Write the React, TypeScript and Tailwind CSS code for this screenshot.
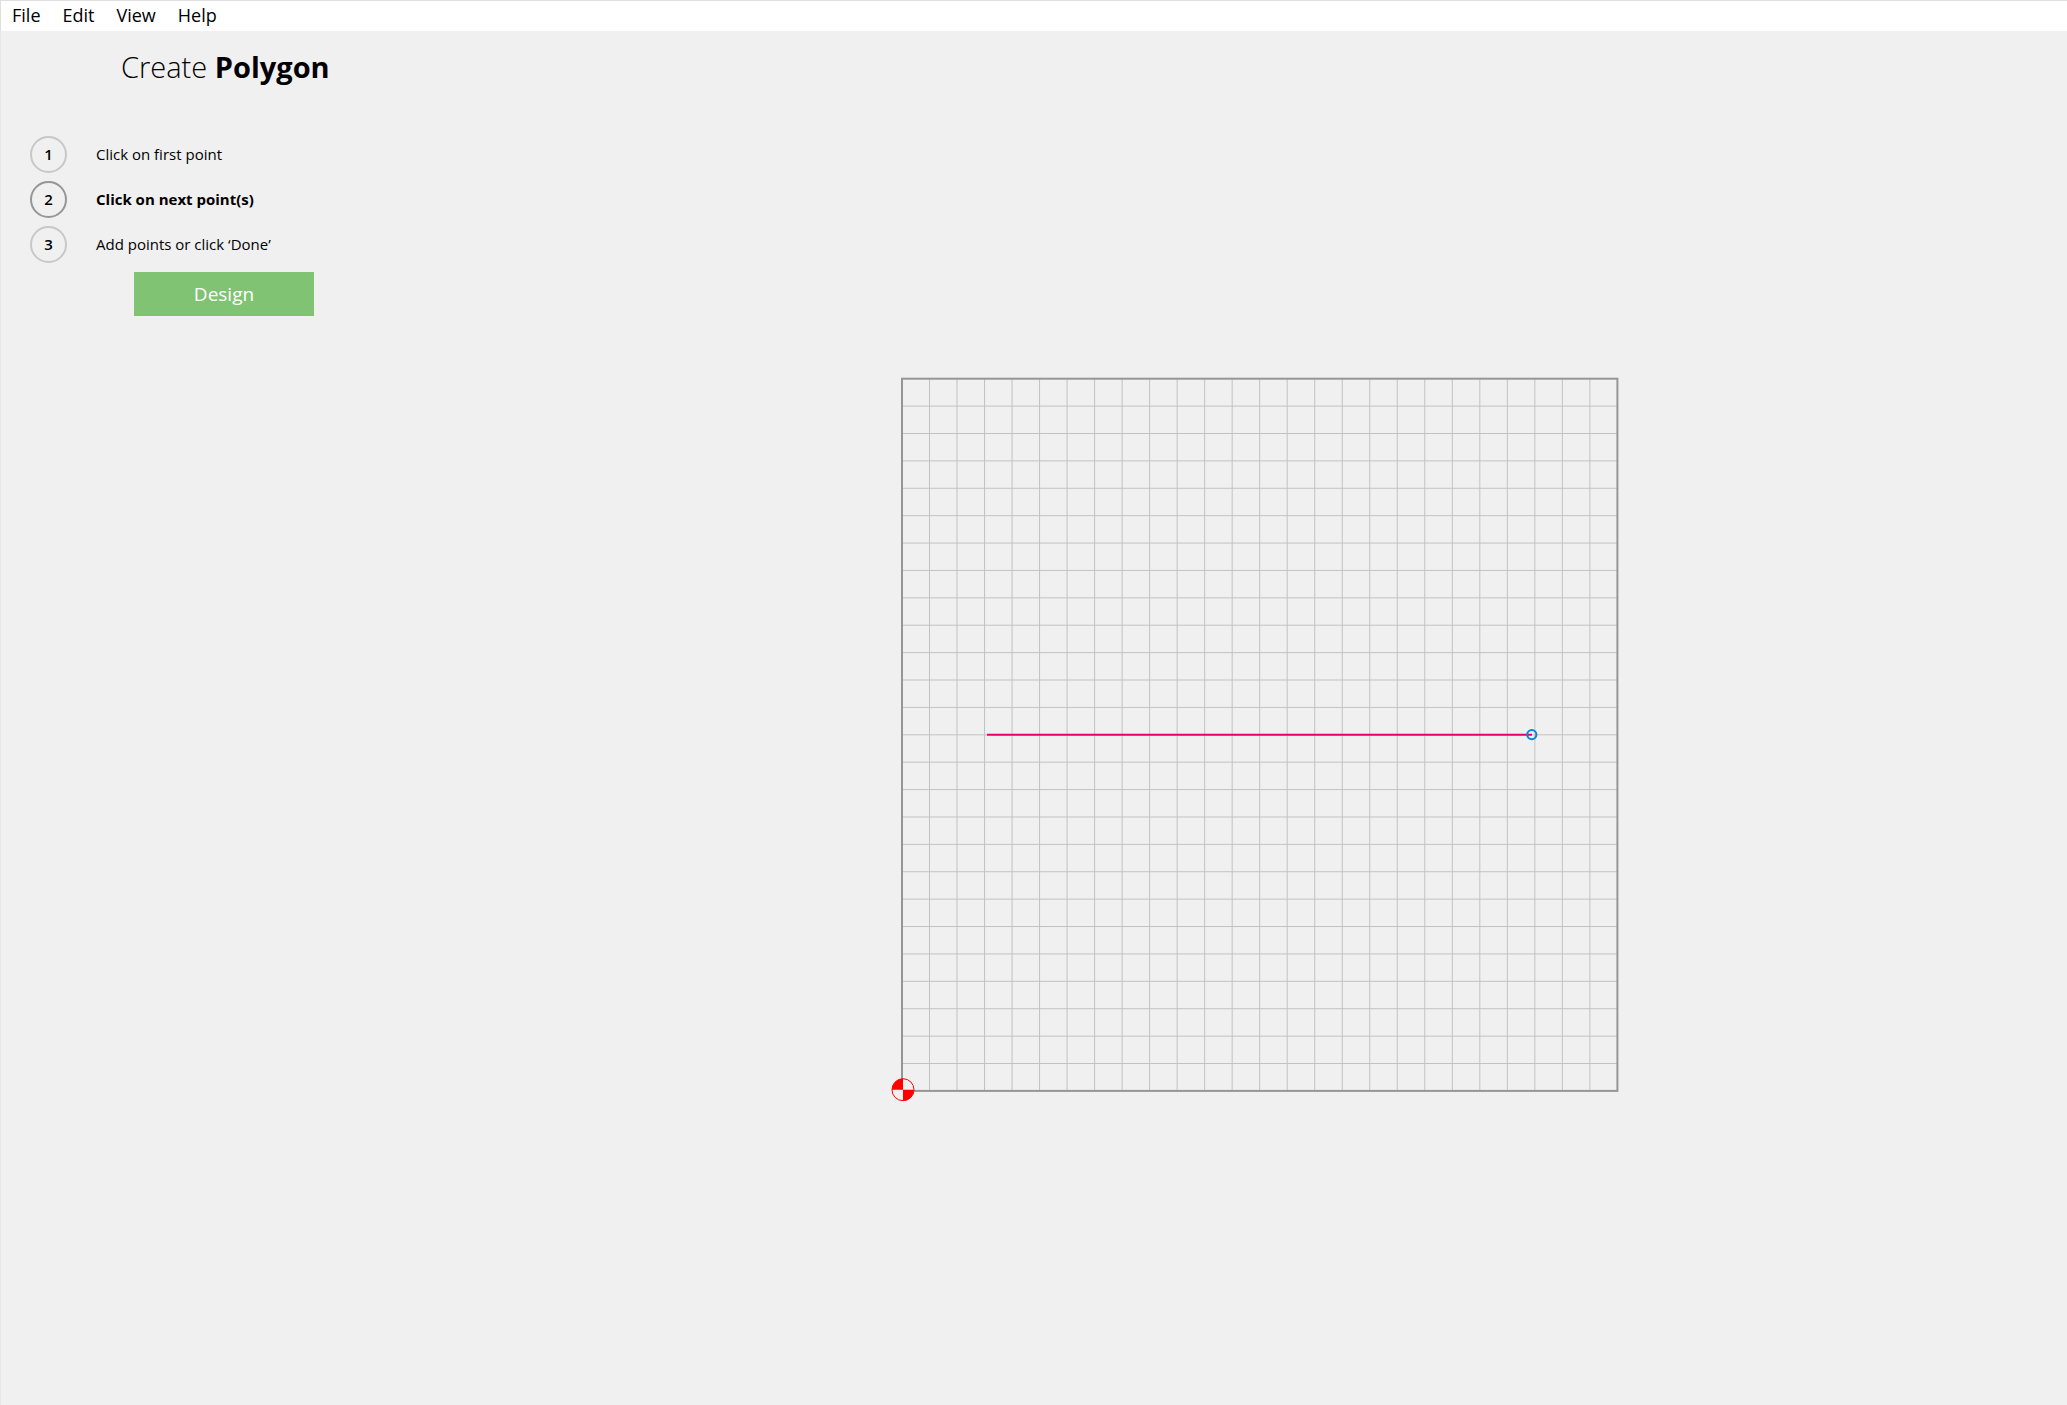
const MENU = ["File", "Edit", "View", "Help"];

const STEPS = [
  { id: 1, label: "Click on first point", active: false },
  { id: 2, label: "Click on next point(s)", active: true },
  { id: 3, label: "Add points or click ‘Done’", active: false },
];

const CELLS = 26;
const GRID = { left: 12, top: 12.7, width: 715.4, height: 712.2 };
const INNER = Array.from({ length: CELLS - 1 }, (_, i) => i + 1);

function MenuBar() {
  return (
    <nav className="flex h-[31px] items-center gap-[22px] border-t border-l border-[#dfdfdf] bg-white pb-0.5 pl-[11px] text-lg leading-6">
      {MENU.map((name) => (
        <button key={name} type="button">
          {name}
        </button>
      ))}
    </nav>
  );
}

function Steps() {
  return (
    <ol className="mt-[49px] flex flex-col gap-2 pl-[29px]">
      {STEPS.map((step) => (
        <li key={step.id} className="flex items-center gap-[29px] text-[15px]">
          <span
            className={
              step.active
                ? "flex size-[37px] items-center justify-center rounded-full border-2 border-[#969696] font-semibold"
                : "flex size-[37px] items-center justify-center rounded-full border-2 border-[#c8c8c8] font-semibold"
            }
          >
            {step.id}
          </span>
          <span className={step.active ? "font-bold" : ""}>{step.label}</span>
        </li>
      ))}
    </ol>
  );
}

function Canvas() {
  const right = GRID.left + GRID.width;
  const bottom = GRID.top + GRID.height;
  return (
    <svg viewBox="0 0 740 738" className="h-auto w-full max-w-[740px]" role="img" aria-label="Drawing grid">
      <g stroke="#c2c2c2" strokeWidth="1">
        {INNER.map((i) => {
          const x = GRID.left + (GRID.width / CELLS) * i;
          return <line key={i} x1={x} x2={x} y1={GRID.top} y2={bottom} />;
        })}
        {INNER.map((i) => {
          const y = GRID.top + (GRID.height / CELLS) * i;
          return <line key={i} x1={GRID.left} x2={right} y1={y} y2={y} />;
        })}
      </g>
      <rect x={GRID.left} y={GRID.top} width={GRID.width} height={GRID.height} fill="none" stroke="#969696" strokeWidth="2" />
      <line x1="97" x2="642" y1="368.8" y2="368.8" stroke="#e6006e" strokeWidth="2" />
      <circle cx="641.8" cy="368.6" r="4.6" fill="none" stroke="#0a84d8" strokeWidth="2" />
      <g>
        <circle cx="13" cy="723.7" r="11" fill="#f0f0f0" stroke="#ff0000" />
        <path d="M13 723.7V712.7A11 11 0 0 0 2 723.7ZM13 723.7V734.7A11 11 0 0 0 24 723.7Z" fill="#ff0000" />
      </g>
    </svg>
  );
}

export default function App() {
  return (
    <div className="flex min-h-screen flex-col bg-[#f0f0f0] font-['Open_Sans','Noto_Sans',sans-serif] text-black">
      <MenuBar />
      <div className="flex flex-1 border-l border-[#e8e8e8]">
        <aside className="w-[452px] shrink-0 pt-4">
          <h1 className="pl-[120px] text-[29px] leading-10 font-light">
            Create <strong className="font-bold">Polygon</strong>
          </h1>
          <Steps />
          <button type="button" className="mt-[9px] ml-[133px] h-11 w-[180px] bg-[#80c373] text-[19px] font-medium text-white">
            Design
          </button>
        </aside>
        <main className="flex flex-1 items-center justify-center pt-[34px]">
          <Canvas />
        </main>
      </div>
    </div>
  );
}
